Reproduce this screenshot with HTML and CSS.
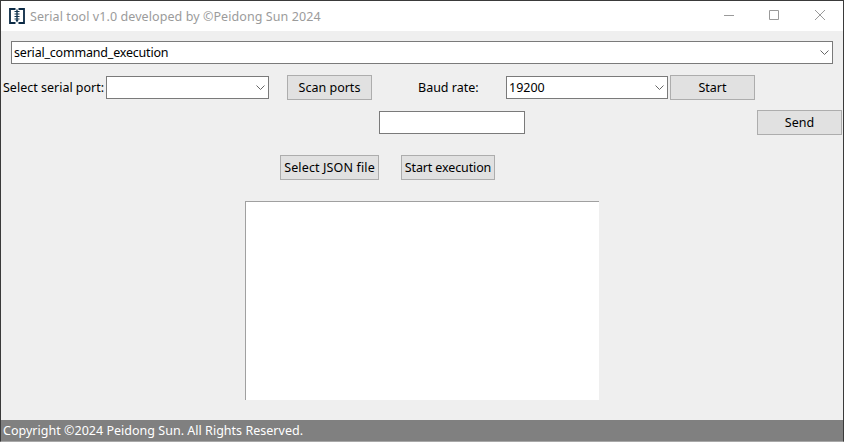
FILE: index.html
```html
<!DOCTYPE html>
<html lang="en">
  <head>
    <meta charset="UTF-8" />
    <meta name="viewport" content="width=device-width, initial-scale=1.0" />
    <title>Serial tool</title>
    <link rel="stylesheet" href="styles.css">
  </head>
  <body>
    <div class="window">
      <header class="titlebar">
        <svg class="app-icon" width="16" height="16" viewBox="0 0 16 16">
          <path d="M6.500 1H1v14h5.500M9.500 1H15v14H9.500" fill="none" stroke="#0b2a45" stroke-width="1.800"/>
          <path d="M5.500 3.500h5M5.500 6h5M5.500 8.500h5M5.500 11h5" stroke="#12344f" stroke-width="1.200"/>
          <path d="M8 1.500v11" stroke="#12344f" stroke-width="1.400"/>
          <path d="M6.500 12h3L8 14.500z" fill="#12344f"/>
        </svg>
        <span class="title">Serial tool v1.0 developed by ©Peidong Sun 2024</span>
        <div class="window-controls">
          <svg width="10" height="10" viewBox="0 0 10 10"><path d="M0 5.500h10" stroke="#9a9a9a"/></svg>
          <svg class="maximize" width="10" height="10" viewBox="0 0 10 10"><path d="M.5.500h9v9h-9z" fill="none" stroke="#9a9a9a"/></svg>
          <svg width="10" height="10" viewBox="0 0 10 10"><path d="M0 0l10 10M10 0L0 10" stroke="#9a9a9a"/></svg>
        </div>
      </header>

      <main class="content">
        <div class="combo combo-mode">
          <span class="mode-name">serial_command_execution</span>
          <svg class="chevron" width="9" height="5" viewBox="0 0 9 5"><path d="M.5.500l4 4 4-4" fill="none" stroke="#666"/></svg>
        </div>

        <div class="row row-port">
          <label class="port-label">Select serial port:</label>
          <div class="combo combo-port">
            <span></span>
            <svg class="chevron" width="9" height="5" viewBox="0 0 9 5"><path d="M.5.500l4 4 4-4" fill="none" stroke="#666"/></svg>
          </div>
          <button class="btn btn-scan">Scan ports</button>
          <label class="baud-label">Baud rate:</label>
          <div class="combo combo-baud">
            <span>19200</span>
            <svg class="chevron" width="9" height="5" viewBox="0 0 9 5"><path d="M.5.500l4 4 4-4" fill="none" stroke="#666"/></svg>
          </div>
          <button class="btn btn-start">Start</button>
        </div>

        <div class="row row-send">
          <input class="send-input" type="text">
          <button class="btn btn-send">Send</button>
        </div>

        <div class="row row-json">
          <button class="btn btn-json">Select JSON file</button>
          <button class="btn btn-exec">Start execution</button>
        </div>

        <div class="output"></div>
      </main>

      <footer class="statusbar">Copyright ©2024 Peidong Sun. All Rights Reserved.</footer>
    </div>
  </body>
</html>
```

FILE: styles.css
```css
* {
  box-sizing: border-box;
}

html,
body {
  margin: 0;
  height: 100%;
}

body {
  font-family: "Noto Sans", sans-serif;
  font-size: 12.5px;
  color: #000;
  background: #efefef;
}

.window {
  display: flex;
  flex-direction: column;
  height: 442px;
  border: 1px solid #3a3a3a;
  border-bottom: 1px solid #a8a8a8;
  background: #efefef;
}

.titlebar {
  display: flex;
  align-items: center;
  height: 30px;
  padding-left: 8px;
  background: #fff;
}

.app-icon {
  flex: none;
  margin-top: -1px;
}

.title {
  margin-left: 5px;
  color: #9b9b9b;
  letter-spacing: 0.08px;
}

.window-controls {
  display: flex;
  gap: 35px;
  margin-top: -2px;
  margin-left: auto;
  margin-right: 18px;
}

.window-controls .maximize {
  margin-right: 1px;
}

.content {
  flex: 1;
  padding-top: 10px;
}

.row {
  display: flex;
  align-items: center;
}

.combo {
  display: flex;
  align-items: center;
  justify-content: space-between;
  height: 23px;
  padding: 0 3px 0 2px;
  background: #fff;
  border: 1px solid #7a7a7a;
}

.chevron {
  flex: none;
}

.combo-mode {
  width: 822px;
  margin-left: 10px;
}

.mode-name {
  letter-spacing: -0.2px;
}

.row-port {
  height: 25px;
  margin-top: 11px;
}

.port-label {
  width: 103px;
  margin-left: 2px;
}

.combo-port {
  width: 163px;
}

.btn {
  height: 25px;
  padding: 0;
  font: inherit;
  color: #000;
  background: #e1e1e1;
  border: 1px solid #adadad;
}

.btn-scan {
  width: 85px;
  margin-left: 18px;
}

.baud-label {
  width: 88px;
  margin-left: 46px;
}

.combo-baud {
  width: 162px;
}

.btn-start {
  width: 85px;
  margin-left: 2px;
}

.row-send {
  height: 25px;
  margin-top: 10px;
}

.send-input {
  width: 146px;
  height: 23px;
  margin-left: 378px;
  background: #fff;
  border: 1px solid #7a7a7a;
}

.btn-send {
  width: 85px;
  margin-left: 232px;
}

.row-json {
  height: 25px;
  margin-top: 20px;
}

.btn-json {
  width: 99px;
  margin-left: 279px;
  letter-spacing: 0.13px;
}

.btn-exec {
  width: 94px;
  margin-left: 22px;
  letter-spacing: -0.13px;
}

.output {
  width: 354px;
  height: 199px;
  margin-top: 21px;
  margin-left: 244px;
  background: #fff;
  border-top: 1px solid #a0a0a0;
  border-left: 1px solid #a0a0a0;
}

.statusbar {
  display: flex;
  align-items: center;
  height: 21px;
  padding-left: 2px;
  color: #fff;
  background: #808080;
  letter-spacing: 0.02px;
}
```
